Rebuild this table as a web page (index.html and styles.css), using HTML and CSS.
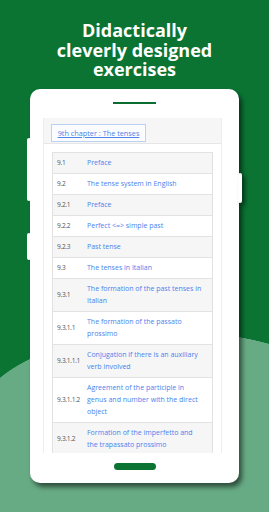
FILE: index.html
```html
<!DOCTYPE html>
<html>
<head>
<meta charset="utf-8">
<link rel="stylesheet" href="styles.css">
</head>
<body>
<div class="page">
  <h1 class="title">Didactically<br>cleverly designed<br>exercises</h1>
  <div class="phone">
    <span class="btn btn-l1"></span>
    <span class="btn btn-l2"></span>
    <span class="btn btn-r"></span>
    <div class="handle"></div>
    <div class="screen">
      <div class="panel-head">
        <a class="chapter">9th chapter : The tenses</a>
      </div>
      <table class="toc">
        <tr><td class="num">9.1</td><td class="lnk">Preface</td></tr>
        <tr><td class="num">9.2</td><td class="lnk">The tense system in English</td></tr>
        <tr><td class="num">9.2.1</td><td class="lnk">Preface</td></tr>
        <tr><td class="num">9.2.2</td><td class="lnk">Perfect &lt;=&gt; simple past</td></tr>
        <tr><td class="num">9.2.3</td><td class="lnk">Past tense</td></tr>
        <tr><td class="num">9.3</td><td class="lnk">The tenses in Italian</td></tr>
        <tr><td class="num">9.3.1</td><td class="lnk">The formation of the past tenses in<br>Italian</td></tr>
        <tr><td class="num">9.3.1.1</td><td class="lnk">The formation of the passato<br>prossimo</td></tr>
        <tr><td class="num">9.3.1.1.1</td><td class="lnk">Conjugation if there is an auxiliary<br>verb involved</td></tr>
        <tr><td class="num">9.3.1.1.2</td><td class="lnk">Agreement of the participle in<br>genus and number with the direct<br>object</td></tr>
        <tr><td class="num">9.3.1.2</td><td class="lnk">Formation of the imperfetto and<br>the trapassato prossimo</td></tr>
      </table>
    </div>
    <div class="pill"></div>
  </div>
</div>
</body>
</html>
```
FILE: styles.css
```css
html, body {
  margin: 0;
  padding: 0;
}
.page {
  width: 269px;
  height: 512px;
  overflow: hidden;
  background:
    radial-gradient(195px 91px at 170px 422px, #67ab84 99.5%, rgba(103,171,132,0) 100%),
    linear-gradient(to bottom, rgba(103,171,132,0) 422px, #67ab84 422px),
    #0b7433;
  display: flex;
  flex-direction: column;
}
.title {
  margin: 0;
  padding-top: 21px;
  font-family: "Open Sans", sans-serif;
  font-weight: 700;
  font-size: 18px;
  line-height: 19.5px;
  color: #ffffff;
  text-align: center;
}
.phone {
  position: relative;
  margin: 9.5px 0 0 30px;
  width: 209px;
  height: 394px;
  background: #ffffff;
  border-radius: 10px;
  box-shadow: 3px 4px 5px rgba(0, 0, 0, 0.55);
  display: flex;
  flex-direction: column;
  align-items: center;
  box-sizing: border-box;
  padding-top: 13px;
}
.btn {
  position: absolute;
  width: 4px;
  background: #ffffff;
  border-radius: 2px;
}
.btn-l1 { left: -3px; top: 49px; height: 63px; }
.btn-l2 { left: -3px; top: 144px; height: 27px; }
.btn-r { right: -3px; top: 84px; height: 30px; box-shadow: 3px 3px 4px rgba(0,0,0,0.45); }
.handle {
  width: 43px;
  height: 2px;
  background: #0b6e30;
}
.screen {
  margin-top: 14px;
  align-self: flex-start;
  margin-left: 13px;
  width: 179px;
  height: 335px;
  overflow: hidden;
  box-sizing: border-box;
  border-left: 1px solid #ededed;
  border-right: 1px solid #ededed;
}
.panel-head {
  background: #f6f6f6;
  border-bottom: 1px solid #e6e6e6;
  height: 26px;
  box-sizing: border-box;
  padding: 4px 0 0 7px;
}
.chapter {
  display: inline-block;
  width: 95px;
  height: 18px;
  box-sizing: border-box;
  border: 1px solid #bcd2f3;
  background: #fbfcff;
  font-family: "Open Sans", sans-serif;
  font-size: 7.3px;
  line-height: 16px;
  color: #4d84e6;
  text-decoration: underline;
  text-align: center;
  white-space: nowrap;
}
.toc {
  margin: 8px 0 0 8px;
  width: 161px;
  table-layout: fixed;
  border-collapse: collapse;
  border: 1px solid #e2e2e2;
  font-family: "Open Sans", sans-serif;
  font-size: 7px;
  line-height: 12px;
}
.toc tr {
  border-bottom: 1px solid #e2e2e2;
}
.toc tr:nth-child(odd) {
  background: #f6f6f6;
}
.toc td {
  padding: 4px 1px 4px 0;
  vertical-align: middle;
}
.toc .num {
  width: 30px;
  padding: 4px 0 4px 4px;
  color: #555555;
  font-size: 6.6px;
  letter-spacing: -0.3px;
  white-space: nowrap;
}
.toc .lnk {
  color: #4a82ee;
}
.pill {
  margin-top: 10px;
  width: 42px;
  height: 7px;
  border-radius: 4px;
  background: #0b7433;
}
```
